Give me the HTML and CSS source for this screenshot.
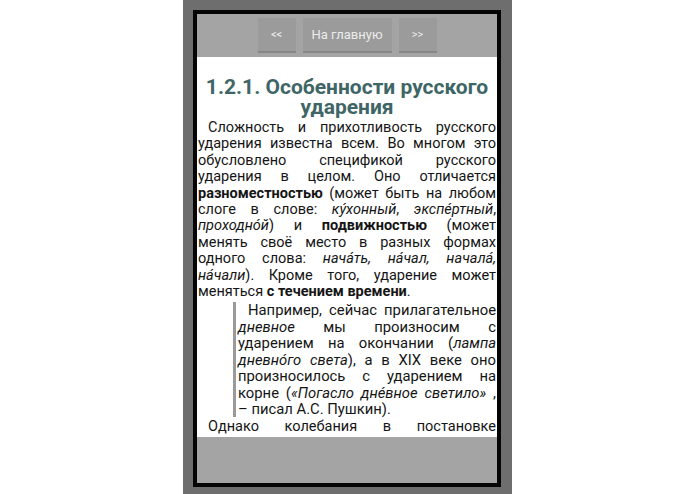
FILE: index.html
```html
<!DOCTYPE html>
<html lang="ru">
<head>
<meta charset="utf-8">
<title>Особенности русского ударения</title>
<link rel="stylesheet" href="styles.css">
</head>
<body>
<div class="device">
  <div class="screen">
    <div class="toolbar">
      <div class="btn btn-small">&lt;&lt;</div>
      <div class="btn btn-home">На главную</div>
      <div class="btn btn-small">&gt;&gt;</div>
    </div>
    <div class="content">
      <h1 class="title">1.2.1. Особенности русского ударения</h1>
      <p class="para">Сложность и прихотливость русского ударения известна всем. Во многом это обусловлено спецификой русского ударения в целом. Оно отличается <b>разноместностью</b> (может быть на любом слоге в слове: <i>ку́хонный</i>, <i>экспе́ртный</i>, <i>проходно́й</i>) и <b>подвижностью</b> (может менять своё место в разных формах одного слова: <i>нача́ть, на́чал, начала́, на́чали</i>). Кроме того, ударение может меняться <b>с течением времени</b>.</p>
      <blockquote class="quote">Например, сейчас прилагательное <i>дневное</i> мы произносим с ударением на окончании (<i>лампа дневно́го света</i>), а в XIX веке оно произносилось с ударением на корне (<i>«Погасло дне́вное светило»</i> , – писал А.С. Пушкин).</blockquote>
      <p class="para">Однако колебания в постановке ударения встречаются и в современном языке, поэтому при выборе правильного варианта следует обращаться к словарям.</p>
    </div>
    <div class="bottom"></div>
  </div>
</div>
</body>
</html>
```

FILE: styles.css
```css
html, body {
  margin: 0;
  padding: 0;
  background: #ffffff;
}

.device {
  width: 329px;
  height: 494px;
  margin: 0 auto;
  padding: 10px 10px 0 10px;
  box-sizing: border-box;
  background: #6e6e6e;
  overflow: hidden;
}

.screen {
  width: 300px;
  height: 469px;
  border: 4px solid #050505;
  display: flex;
  flex-direction: column;
  background: #a4a4a4;
}

.toolbar {
  height: 43px;
  flex: none;
  display: flex;
  justify-content: center;
  align-items: flex-start;
  gap: 7px;
  padding-top: 4px;
  box-sizing: border-box;
  background: #a4a4a4;
}

.btn {
  height: 35px;
  box-sizing: border-box;
  background: #9b9b9b;
  border-bottom: 2px solid #878787;
  color: #ececec;
  font-family: Roboto, "Noto Sans", sans-serif;
  font-size: 13px;
  display: flex;
  align-items: center;
  justify-content: center;
}

.btn-small {
  width: 38px;
  font-size: 11px;
}

.btn-home {
  width: 89px;
}

.content {
  height: 380px;
  flex: none;
  background: #ffffff;
  overflow: hidden;
  padding: 20px 1px 0 1px;
  box-sizing: border-box;
  font-family: Roboto, "Noto Sans", sans-serif;
  color: #151515;
}

.title {
  margin: 0 0 3px 0;
  font-size: 21px;
  line-height: 20px;
  font-weight: bold;
  text-align: center;
  color: #3f6666;
}

.para {
  margin: 0;
  font-size: 14.5px;
  line-height: 16.4px;
  text-align: justify;
  text-indent: 10px;
}

.quote {
  margin: 2px 0 2px 35px;
  padding-left: 2px;
  border-left: 3px solid #9a9a9a;
  font-size: 14.8px;
  line-height: 16.4px;
  text-align: justify;
  text-indent: 10px;
}

.bottom {
  flex: 1;
  background: #a4a4a4;
}
```
